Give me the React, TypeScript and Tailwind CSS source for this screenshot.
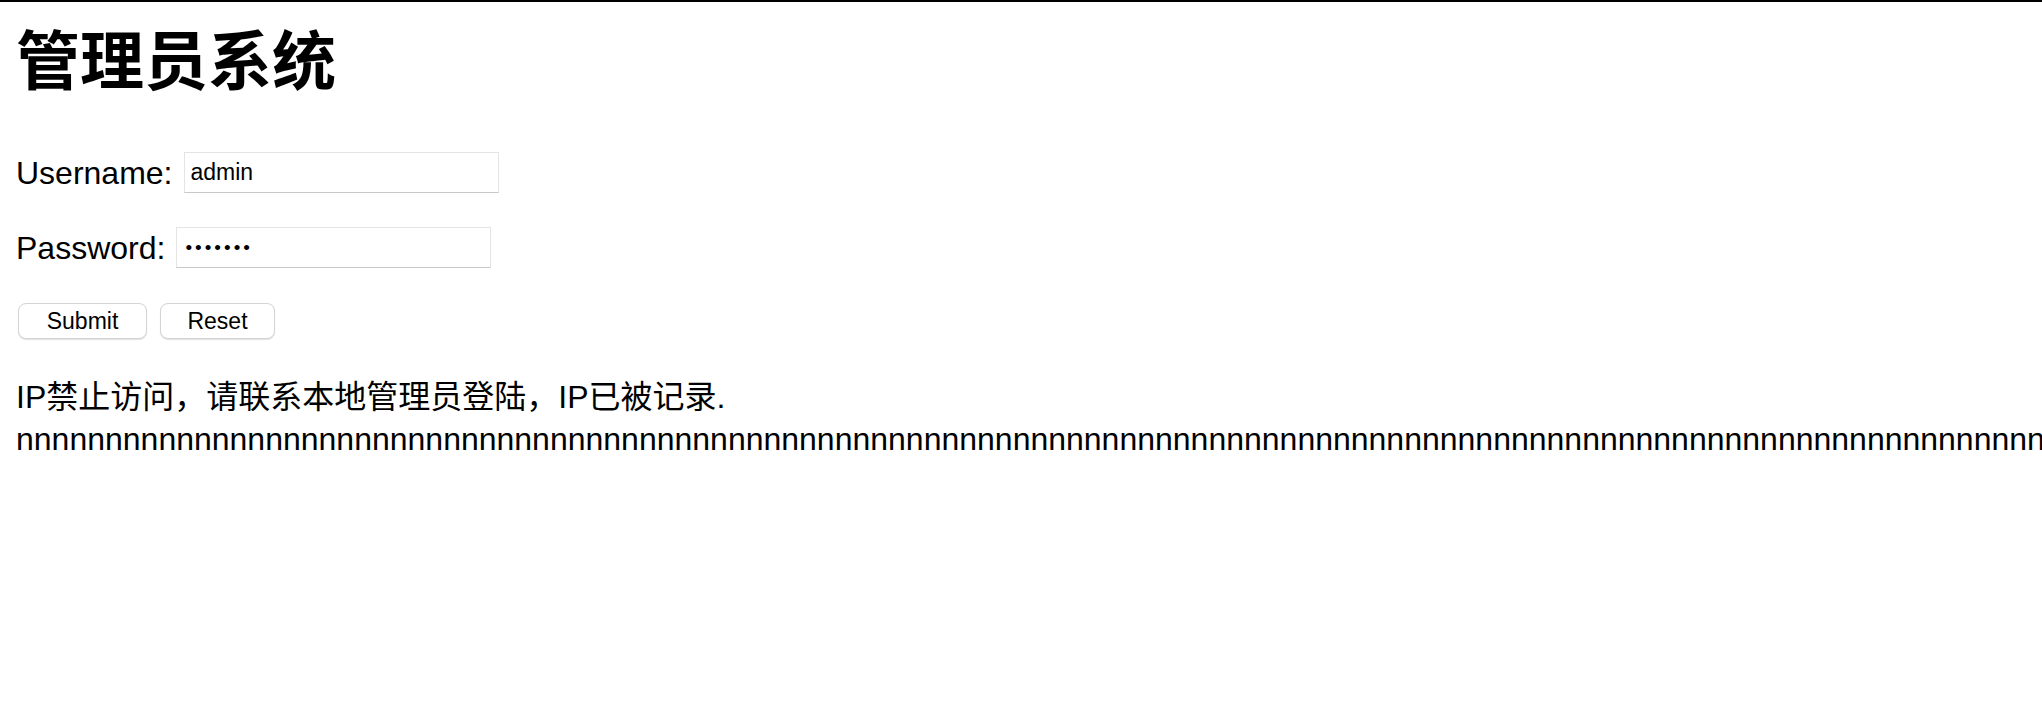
import React from "react";

const font = {
  fontFamily: '"Liberation Sans", "Noto Sans CJK SC", sans-serif',
};

export default function App() {
  const filler = "n".repeat(160);

  return (
    <div
      className="min-h-screen w-full overflow-hidden border-t-2 border-black bg-white pl-4 text-black"
      style={font}
    >
      {/* Title */}
      <h1 className="mt-[28px] text-[64px] font-bold leading-none">管理员系统</h1>

      {/* Login form */}
      <form className="flex flex-col" onSubmit={(e) => e.preventDefault()}>
        <div className="mt-[58px] flex items-center gap-[11px]">
          <label className="text-[32px] leading-none">Username:</label>
          <input
            type="text"
            defaultValue="admin"
            className="h-[41px] w-[315px] border border-[#e4e4e4] border-b-[#c9c9c9] bg-white pl-[6px] text-[23px] outline-none"
            style={font}
          />
        </div>

        <div className="mt-[34px] flex items-center gap-[11px]">
          <label className="text-[32px] leading-none">Password:</label>
          <input
            type="password"
            defaultValue="1234567"
            className="h-[41px] w-[315px] border border-[#e4e4e4] border-b-[#c9c9c9] bg-white pl-[8px] text-[19px] tracking-[3px] outline-none"
            style={font}
          />
        </div>

        <div className="mt-[35px] flex items-center gap-[13px] pl-[2px]">
          <button
            type="submit"
            className="h-[36px] w-[129px] rounded-[8px] border border-[#d4d4d4] bg-white text-[23px] leading-none shadow-[0_1px_1px_rgba(0,0,0,0.12)]"
            style={font}
          >
            Submit
          </button>
          <button
            type="reset"
            className="h-[36px] w-[115px] rounded-[8px] border border-[#d4d4d4] bg-white text-[23px] leading-none shadow-[0_1px_1px_rgba(0,0,0,0.12)]"
            style={font}
          >
            Reset
          </button>
        </div>
      </form>

      {/* Blocked message */}
      <div className="mt-[37px] text-[32px] leading-[42px]">
        <p>IP禁止访问，请联系本地管理员登陆，IP已被记录.</p>
        <p className="whitespace-nowrap">{filler}</p>
      </div>
    </div>
  );
}
